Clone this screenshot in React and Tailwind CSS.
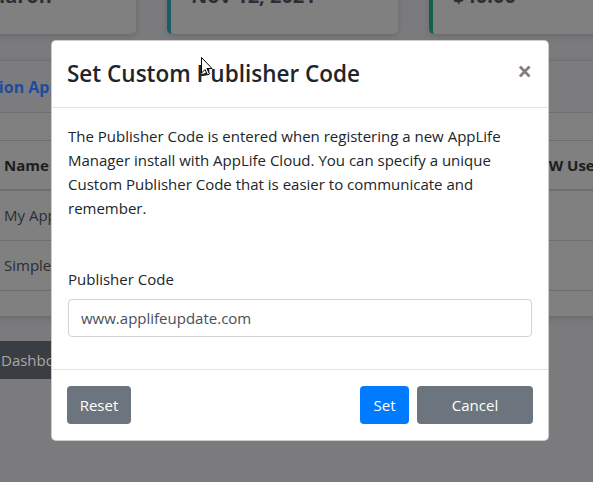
import { useState } from 'react';

const rows = ['My Application', 'Simple Updater'];

export default function App() {
  const [code, setCode] = useState('www.applifeupdate.com');

  return (
    <div className="relative h-[482px] w-[593px] overflow-hidden bg-[#7b7b7d] font-['Open_Sans',sans-serif]">
      {/* Dimmed page behind the modal */}
      <div className="-ml-[95px] -mt-[40px] flex gap-[31px]">
        <div className="h-[74px] w-[231px] shrink-0 rounded-[5px] bg-[#808080] pl-[76px] pt-[24px] shadow-[0_2px_6px_rgba(0,0,0,0.15)]">
          <div className="text-[20px] font-bold leading-6 text-[#2d2e34]">Sharon</div>
        </div>
        <div className="h-[74px] w-[231px] shrink-0 rounded-[5px] border-l-4 border-[#1b5d66] bg-[#808080] px-5 pt-[24px] shadow-[0_2px_6px_rgba(0,0,0,0.15)]">
          <div className="text-[20px] font-bold leading-6 text-[#2d2e34]">Nov 12, 2021</div>
        </div>
        <div className="h-[74px] w-[231px] shrink-0 rounded-[5px] border-l-4 border-[#0e6445] bg-[#808080] px-5 pt-[24px] shadow-[0_2px_6px_rgba(0,0,0,0.15)]">
          <div className="text-[20px] font-bold leading-6 text-[#2d2e34]">$40.00</div>
        </div>
      </div>

      <div className="-mx-[28px] mt-[26px] h-[256px] rounded-[5px] border-t border-[#6e6e6e] bg-[#808080] shadow-[0_2px_6px_rgba(0,0,0,0.15)]">
        <div className="flex h-[52px] items-center border-b border-[#6e6e6e] bg-[#7c7c7e] px-5">
          <span className="-ml-[68px] text-[16px] font-bold text-[#1d4c9c]">Subscription Applications</span>
        </div>
        <div className="px-5 pt-[27px]">
          <div className="flex h-[51px] items-center justify-between border-y border-b-2 border-[#6e6e6e] px-3 text-[15px] font-bold text-[#1c1d21]">
            <span>Name</span>
            <span className="-mr-[20px]">NEW Users</span>
          </div>
          {rows.map((r) => (
            <div key={r} className="flex h-[50px] items-center border-b border-[#6e6e6e] px-3 text-[15px] text-[#2b2d33]">
              {r}
            </div>
          ))}
        </div>
      </div>

      <div className="mt-[25px] flex h-[38px] w-[70px] items-center rounded-r-[4px] bg-[#3a3d41] pl-[1px] text-[15px] text-[#a8a8a8]">
        Dashboard
      </div>

      {/* Modal */}
      <div className="absolute left-[51px] top-[40px] w-[498px] rounded-[5px] border border-black/20 bg-white text-[#212529]">
        <div className="flex items-start justify-between border-b border-[#dee2e6] p-4">
          <h5 className="-ml-[1px] text-[22.5px] font-semibold leading-[34px]">Set Custom Publisher Code</h5>
          <button className="-mt-[1px] text-[26px] font-bold leading-[30px] text-black/50">×</button>
        </div>
        <div className="p-4">
          <p className="mb-[47px] text-[15px] leading-6">
            The Publisher Code is entered when registering a new AppLife Manager install with AppLife Cloud. You can specify a unique Custom Publisher Code that is easier to communicate and remember.
          </p>
          <div className="mb-4">
            <label className="mb-2 block text-[15px] leading-6">Publisher Code</label>
            <input
              value={code}
              onChange={(e) => setCode(e.target.value)}
              className="block h-[38px] w-full rounded-[4px] border border-[#ced4da] px-3 text-[15px] text-[#495057] outline-none"
            />
          </div>
        </div>
        <div className="flex items-center border-t border-[#dee2e6] p-3">
          <button className="my-1 ml-[3px] mr-1 h-[38px] w-[64px] rounded-[4px] bg-[#6c757d] text-[15px] text-white">Reset</button>
          <button className="my-1 ml-auto mr-1 h-[38px] w-[49px] rounded-[4px] bg-[#007bff] text-[15px] text-white">Set</button>
          <button className="my-1 ml-1 mr-[3px] h-[38px] w-[116px] rounded-[4px] bg-[#6c757d] text-[15px] text-white">Cancel</button>
        </div>
      </div>

      {/* mouse pointer */}
      <svg className="absolute left-[201px] top-[57px]" width="12" height="19" viewBox="0 0 12 19">
        <path d="M0.5 0.5 L0.5 16 L4 12.5 L6.5 18 L8.5 17 L6 11.5 L11 11.5 Z" fill="white" stroke="black" strokeWidth="1" />
      </svg>
    </div>
  );
}
